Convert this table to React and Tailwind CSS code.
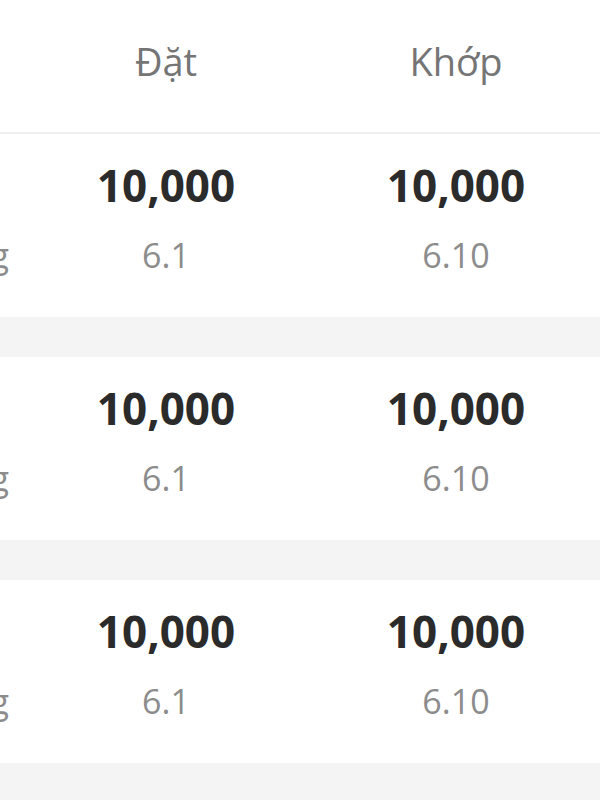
import React from 'react'

const orders = [
  { label: 'Thường', placed: '10,000', placedPrice: '6.1', matched: '10,000', matchedPrice: '6.10' },
  { label: 'Thường', placed: '10,000', placedPrice: '6.1', matched: '10,000', matchedPrice: '6.10' },
  { label: 'Thường', placed: '10,000', placedPrice: '6.1', matched: '10,000', matchedPrice: '6.10' },
]

const font = { fontFamily: '"Open Sans", "Noto Sans", sans-serif' }

const Cell = ({ qty, price }) => (
  <div className="w-[290px] shrink-0 flex flex-col items-center">
    <div className="text-[44px] leading-[48px] font-bold text-[#2b2b2b]">{qty}</div>
    <div className="mt-[24px] text-[34px] leading-[44px] text-[#8c8c8c]">{price}</div>
  </div>
)

const App = () => {
  return (
    <div className="w-[600px] h-[800px] overflow-hidden bg-[#f4f4f4]" style={font}>
      {/* Header */}
      <div className="flex h-[134px] bg-white border-b-2 border-[#efefef] pt-[35px]">
        <div className="w-[21px] shrink-0" />
        <div className="w-[290px] shrink-0 text-center text-[38px] leading-[52px] text-[#757575]">Đặt</div>
        <div className="w-[290px] shrink-0 text-center text-[38px] leading-[52px] text-[#757575]">Khớp</div>
      </div>

      {/* Rows */}
      <div className="flex flex-col gap-[40px]">
        {orders.map((o, i) => (
          <div key={i} className="flex h-[183px] bg-white pt-[27px]">
            {/* label column, scrolled partly out of view */}
            <div className="w-[21px] shrink-0 overflow-hidden">
              <div className="flex justify-end pr-[12px] mt-[72px] text-[34px] leading-[44px] text-[#8c8c8c] whitespace-nowrap">
                {o.label}
              </div>
            </div>
            <Cell qty={o.placed} price={o.placedPrice} />
            <Cell qty={o.matched} price={o.matchedPrice} />
          </div>
        ))}
      </div>
    </div>
  )
}

export default App
